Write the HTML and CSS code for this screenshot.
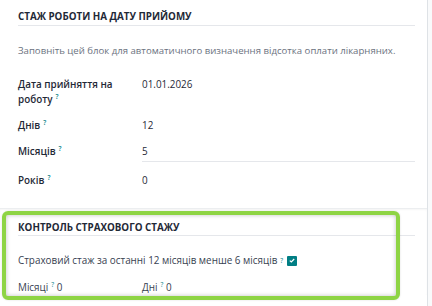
FILE: index.html
```html
<!DOCTYPE html>
<html lang="uk">
<head>
    <meta charset="UTF-8">
    <meta name="viewport" content="width=device-width, initial-scale=1.0">
    <link rel="stylesheet" href="styles.css">
</head>
<body>
    <div class="page">
        <div class="sheet">
            <div class="group">
                <h4 class="group-title">Стаж роботи на дату прийому</h4>
                <p class="hint">Заповніть цей блок для автоматичного визначення відсотка оплати лікарняних.</p>
                <div class="fields">
                    <div class="label">Дата прийняття на роботу<sup>?</sup></div>
                    <div class="value">01.01.2026</div>

                    <div class="label">Днів<sup>?</sup></div>
                    <div class="value">12</div>

                    <div class="label">Місяців<sup>?</sup></div>
                    <div class="value value-input">5</div>

                    <div class="label">Років<sup>?</sup></div>
                    <div class="value">0</div>
                </div>
            </div>

            <div class="group group-second">
                <h4 class="group-title">Контроль страхового стажу</h4>
                <div class="check-row">
                    Страховий стаж за останні 12 місяців менше 6 місяців<sup>?</sup>
                    <span class="checkbox">
                        <svg width="6" height="5" viewBox="0 0 6 5"><path d="M0.8 2.6 L2.3 4 L5.2 1" fill="none" stroke="#fff" stroke-width="1.2"/></svg>
                    </span>
                </div>
                <div class="inline-row">
                    <div class="inline-field">Місяці<sup>?</sup> 0</div>
                    <div class="inline-field">Дні<sup>?</sup> 0</div>
                </div>
                <!-- highlight frame -->
                <div class="highlight"></div>
            </div>
        </div>
        <div class="side"></div>
    </div>
</body>
</html>
```

FILE: styles.css
```css
body {
    margin: 0;
    font-family: 'Open Sans', 'Noto Sans', sans-serif;
    font-size: 9.9px;
    color: #374151;
    background: #ffffff;
}

.page {
    display: flex;
    height: 306px;
    overflow: hidden;
}

.sheet {
    width: 427px;
    border-right: 1px solid #dee2e6;
    background: #ffffff;
}

.side {
    flex: 1;
    background: #f9fafb;
}

.group {
    padding: 0 12px 0 18px;
}

.group-title {
    margin: 0;
    padding: 11px 0 2px;
    font-size: 9.8px;
    line-height: 12px;
    font-weight: 700;
    text-transform: uppercase;
    color: #1f2937;
    border-bottom: 1px solid #e5e7eb;
}

.hint {
    margin: 18px 0 19px;
    font-size: 9.6px;
    line-height: 14px;
    white-space: nowrap;
    color: #6b7280;
}

.fields {
    display: grid;
    grid-template-columns: 124px 1fr;
    row-gap: 11px;
    padding-bottom: 20px;
}

.label {
    font-weight: 600;
    color: #1f2937;
    line-height: 15px;
    padding-right: 8px;
}

.value {
    line-height: 15px;
    color: #1f2937;
}

.value-input {
    border-bottom: 1px solid #e5e7eb;
    padding-bottom: 2px;
}

sup {
    font-size: 6.5px;
    color: #017e84;
    margin-left: 3px;
    vertical-align: 4px;
    line-height: 0;
}

.group-second {
    position: relative;
    border-top: 1px solid #eceef0;
    box-shadow: inset 0 1px 2px rgba(0, 0, 0, 0.04);
    padding-top: 1px;
}

.group-second .group-title {
    padding: 12px 0 1px;
}

.check-row {
    display: flex;
    align-items: center;
    margin-top: 17px;
    line-height: 15px;
}

.checkbox {
    display: inline-flex;
    align-items: center;
    justify-content: center;
    width: 10px;
    height: 10px;
    margin-left: 4px;
    background: #017e84;
    border-radius: 1px;
}

.inline-row {
    display: grid;
    grid-template-columns: 124px 1fr;
    margin-top: 12px;
    line-height: 15px;
}

.highlight {
    position: absolute;
    left: 2px;
    top: 2px;
    width: 398px;
    height: 89px;
    box-sizing: border-box;
    border: 4px solid #8ed444;
    border-radius: 6px;
    box-shadow: inset 0 0 4px rgba(0, 0, 0, 0.25), 0 0 2px rgba(0, 0, 0, 0.15);
}
```
